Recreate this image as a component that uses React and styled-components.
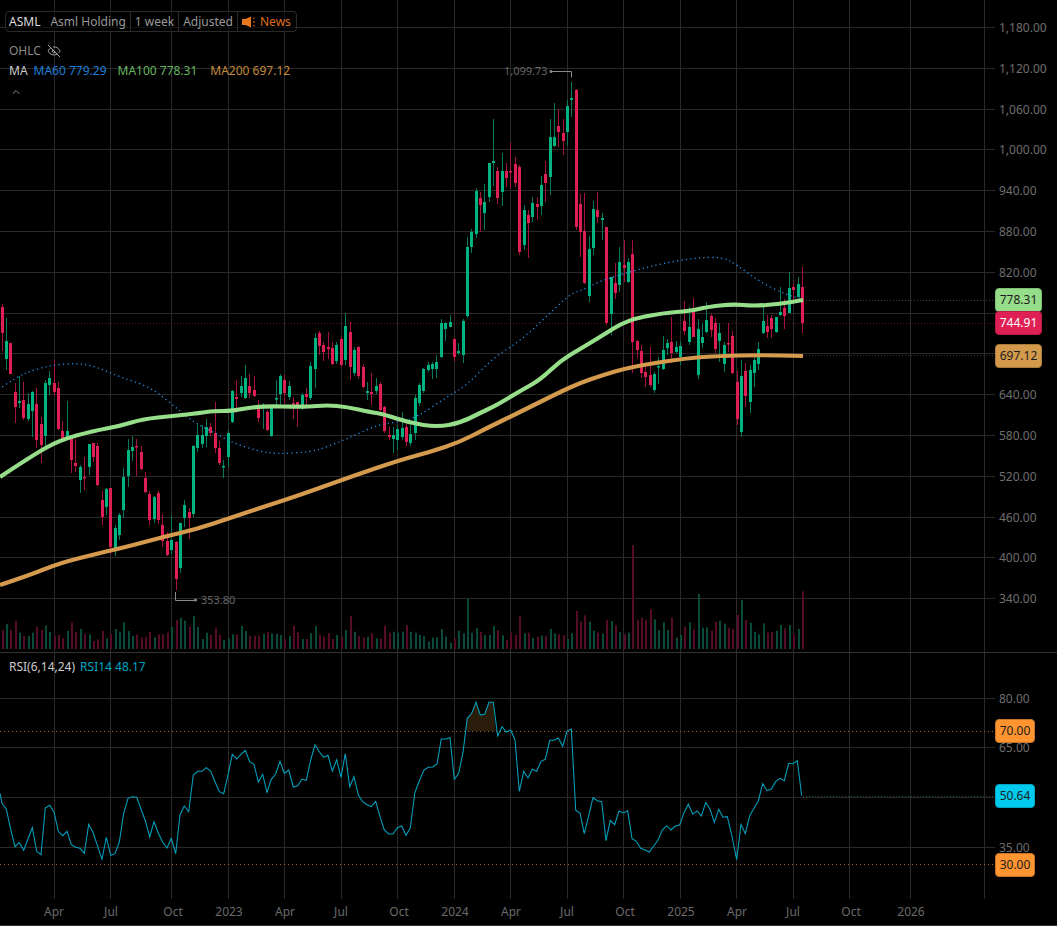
import React from "react";
import styled, { createGlobalStyle } from "styled-components";
import { EyeOff, ChevronUp } from "lucide-react";

const FONT = `"Noto Sans", "Open Sans", "Liberation Sans", sans-serif`;

const Global = createGlobalStyle`
  html, body { margin: 0; padding: 0; background: #000; }
  body { font-family: ${FONT}; }
`;

/* [up, bodyTop, bodyBottom, wickTop, wickBottom] */
const CANDLES = [
[0,307,333,304,351],[1,341,359,318,370],[0,343,374,343,374],[0,392,407,383,423],[1,401,403,376,408],
[0,400,418,382,420],[1,404,419,393,421],[1,392,411,391,437],[0,404,440,388,448],[0,424,445,417,463],
[1,383,436,380,447],[1,378,385,371,395],[0,383,392,360,396],[0,388,429,382,430],[0,431,438,421,439],
[1,431,438,401,440],[0,438,460,437,473],[0,463,466,439,472],[1,467,480,465,493],[0,477,478,457,490],
[1,444,467,444,475],[0,443,457,443,462],[0,446,485,443,486],[0,500,517,491,525],[1,489,507,488,515],
[0,488,547,488,555],[1,528,548,525,556],[1,515,535,513,540],[1,477,510,468,518],[1,450,476,439,487],
[1,447,451,436,461],[0,446,447,439,476],[0,452,469,446,470],[0,478,492,472,493],[0,494,520,491,525],
[1,497,519,496,523],[0,493,520,491,524],[0,525,541,514,547],[0,541,555,532,556],[1,540,550,515,554],
[0,542,579,541,590],[1,523,568,523,573],[1,505,518,500,527],[0,512,518,508,539],[1,446,514,445,517],
[1,435,448,425,452],[1,435,444,425,448],[1,427,436,419,447],[0,427,433,423,436],[0,433,448,402,453],
[0,448,463,441,465],[1,466,467,460,478],[1,433,457,430,467],[1,391,422,390,423],[0,397,399,380,413],
[1,386,393,376,397],[1,378,398,365,399],[0,386,393,374,398],[0,390,396,376,397],[0,407,418,400,422],
[1,406,408,403,429],[0,412,430,410,431],[1,407,436,405,437],[1,398,399,380,408],[1,376,394,374,408],
[0,380,393,375,404],[1,386,397,381,400],[0,403,404,397,419],[0,402,405,402,427],[1,395,406,393,410],
[0,394,397,388,407],[1,366,398,362,400],[1,338,369,333,388],[0,333,346,331,355],[0,345,352,342,361],
[0,347,349,332,359],[0,348,364,342,365],[1,345,361,342,364],[0,339,365,337,367],[1,326,360,313,365],
[0,332,367,322,380],[1,350,373,347,376],[0,347,376,346,379],[0,367,387,364,388],[1,391,393,382,400],
[0,392,394,373,405],[1,386,391,378,394],[0,384,410,382,411],[0,407,431,406,433],[0,435,437,427,440],
[1,435,439,427,453],[1,429,440,426,450],[1,428,437,412,440],[0,427,442,424,446],[1,434,443,425,446],
[1,398,433,395,440],[1,385,403,383,406],[1,369,391,368,393],[1,365,370,362,372],[1,364,369,362,379],
[1,362,369,355,378],[1,323,357,319,358],[1,323,329,322,341],[1,322,327,315,327],[0,339,357,338,362],
[1,351,353,343,355],[1,321,355,319,363],[1,247,316,237,318],[1,232,247,229,253],[1,191,234,188,238],
[0,198,205,192,232],[1,202,213,184,230],[1,163,197,163,202],[1,161,163,119,186],[0,171,198,167,204],
[1,171,192,153,206],[0,171,178,163,187],[0,171,172,142,189],[0,164,183,157,187],[0,167,252,165,255],
[1,210,245,205,250],[0,215,223,210,258],[1,203,217,197,222],[0,204,207,197,220],[1,185,206,176,215],
[0,174,183,161,202],[1,137,177,119,195],[1,137,146,103,147],[0,126,132,109,147],[0,133,141,119,155],
[1,106,132,100,146],[1,98,100,82,117],[0,90,227,89,230],[0,204,232,194,257],[0,231,283,193,284],
[1,249,296,236,302],[1,209,248,201,255],[0,210,217,192,223],[1,218,220,213,240],[0,227,323,227,325],
[1,277,314,277,335],[0,283,293,263,299],[1,262,285,247,292],[0,265,268,240,282],[1,262,282,258,283],
[0,254,342,240,373],[0,341,350,340,358],[0,351,373,345,378],[0,372,377,367,387],[0,375,385,347,387],
[1,374,390,372,393],[1,366,367,357,384],[1,350,369,336,370],[1,343,348,339,355],[0,342,353,317,363],
[1,347,352,341,353],[1,346,357,341,365],[0,321,331,301,335],[1,327,342,307,345],[0,312,337,298,337],
[1,329,375,319,379],[1,337,343,323,348],[1,320,332,302,333],[0,316,330,314,337],[0,323,349,318,353],
[1,333,341,323,362],[1,345,364,342,372],[0,343,344,323,352],[0,336,373,331,374],[0,382,419,371,425],
[1,376,432,360,437],[0,371,396,363,407],[1,370,402,365,413],[1,360,373,355,387],[1,349,364,342,370],
[1,321,333,306,334],[0,326,332,315,338],[0,318,329,315,338],[1,317,332,317,333],[1,312,315,287,316],
[0,308,316,299,329],[1,288,313,272,313],[0,287,290,283,300],[1,284,297,277,297],[0,287,323,267,333],
];

/* tops of the volume bars, as measured on a 3x crop (bottom at 207) */
const VOLUME = [
150,132,150,122,158,168,168,158,140,150,136,156,168,164,175,153,127,155,147,162,163,183,178,153,175,162,147,155,127,153,
168,163,172,170,155,172,163,163,158,141,120,113,122,141,108,141,177,158,165,143,165,180,175,163,163,138,153,167,167,167,
162,155,160,162,165,177,168,138,155,177,177,160,138,165,170,160,177,165,170,150,108,155,168,172,170,160,175,175,137,158,
155,158,
155,135,155,158,165,168,185,173,172,147,170,188,177,152,160,57,158,145,155,165,165,138,150,166,180,158,165,108,160,158,
174,170,167,168,147,160,163,166,177,160,93,125,106,125,152,158,161,120,123,136,156,163,158,-105,120,113,120,88,118,150,
127,150,113,173,165,140,127,148,42,143,142,152,125,122,131,143,147,105,60,120,128,155,163,130,158,155,152,135,145,135,
165,147,34,
];

const MA100 = [[0,477],[33,455],[60,440],[93,431],[120,426],[143,419],[173,416],[200,413],[213,411],[233,411],[258,406],[307,407],[327,405],[347,407],[370,412],[383,414],[410,423],[437,427],[460,423],[480,413],[497,405],[520,391],[540,380],[560,361],[580,349],[600,337],[627,320],[663,313],[690,311],[707,307],[733,304],[753,306],[780,304],[803,300]];
const MA200 = [[0,585],[30,575],[60,563],[100,553],[130,546],[163,537],[197,529],[230,518],[260,508],[300,495],[350,477],[400,460],[430,452],[460,442],[487,428],[520,412],[560,392],[580,383],[600,376],[630,367],[687,358],[720,356],[760,355],[803,356]];
const MA60 = [[2,387],[17,377],[33,370],[53,365],[77,363],[97,367],[120,377],[150,387],[173,405],[193,422],[213,432],[233,443],[258,451],[277,454],[310,452],[327,447],[353,436],[380,424],[400,422],[417,417],[447,397],[467,385],[493,358],[520,341],[545,318],[570,294],[585,289],[600,281],[633,271],[660,264],[693,258],[723,257],[737,265],[760,282],[787,295],[803,299]];

const RSI_A = [[0,310],[6,340],[19,357],[32,418],[45,470],[58,458],[71,481],[84,447],[97,413],[110,484],[123,494],[136,354],[149,346],[162,366],[175,424],[188,437],[201,424],[214,464],[227,472],[240,475],[253,490],[266,403],[279,427],[292,466],[306,508],[319,442],[332,496],[345,491],[358,456],[371,370],[384,325],[397,320],[410,322],[423,357],[436,392],[449,441],[462,395],[475,430],[488,456],[501,474],[514,445],[527,491],[540,375],[553,348],[566,365],[580,255],[593,244],[606,244],[619,233],[632,244],[645,275],[658,305],[671,311],[684,255],[697,193],[710,207],[723,193],[736,181],[749,215],[762,223],[775,276],[788,253],[801,307],[814,268],[827,252],[840,214],[853,250],[866,240],[880,291],[893,287],[906,267],[919,271],[932,210],[945,164],[958,185],[971,202],[984,196],[997,243],[1010,209],[1023,262],[1036,191],[1049,290],[1062,260],[1075,315],[1088,335],[1101,344],[1114,350],[1127,334],[1140,380],[1153,420],[1166,432],[1179,432],[1192,413],[1205,408],[1218,436],[1231,414],[1244,310],[1258,272]];
const RSI_B = [[12,240],[25,232],[38,231],[51,222],[64,147],[77,147],[90,143],[103,268],[116,250],[129,187],[142,85],[155,70],[168,37],[181,75],[194,73],[207,37],[220,37],[233,138],[246,110],[259,126],[272,120],[285,150],[298,304],[311,244],[324,264],[337,238],[350,244],[363,214],[376,208],[389,151],[402,151],[415,144],[428,169],[441,123],[454,117],[467,361],[480,369],[493,431],[506,377],[519,323],[532,332],[545,335],[558,452],[571,391],[584,404],[597,363],[610,369],[623,362],[636,446],[649,454],[662,475],[675,480],[688,486],[701,468],[714,450],[727,420],[740,407],[753,420],[766,408],[779,405],[792,368],[805,343],[818,373],[831,363],[844,378],[857,338],[870,357],[883,397],[896,358],[909,382],[922,380],[935,435],[950,509],[963,403],[976,431],[989,377],[1002,355],[1015,333],[1028,281],[1041,302],[1054,297],[1067,275],[1080,265],[1093,272],[1106,220],[1119,221],[1132,212],[1145,317]];
const RSI = [
  ...RSI_A.map(([x, y]) => [x / 3, 690 + y / 3]),
  ...RSI_B.map(([x, y]) => [420 + x / 3, 690 + y / 3]),
];
const OVERBOUGHT = [[140,124],[142,85],[155,70],[168,37],[181,75],[194,73],[207,37],[220,37],[227,124]]
  .map(([x, y]) => `${420 + x / 3},${690 + y / 3}`).join(" ");

const VERTICALS = [54.5,110.5,171.5,228.5,284.5,341.5,397.5,454.5,510.5,567.5,623.5,680.5,736.5,793.5,849.5,910.5,984.5];
const PRICE_LINES = Array.from({ length: 15 }, (_, i) => Math.floor(27.5 + i * 40.8) + 0.5);
const PRICES = ["1,180.00","1,120.00","1,060.00","1,000.00","940.00","880.00","820.00",null,null,"640.00","580.00","520.00","460.00","400.00","340.00"];
const RSI_LINES = [[698.5,"80.00"],[747.5,"65.00"],[797.5,null],[847.5,"35.00"]];
const TIMES = [["Apr",54],["Jul",111],["Oct",173],["2023",229],["Apr",285],["Jul",341],["Oct",399],["2024",455],["Apr",511],["Jul",567],["Oct",625],["2025",681],["Apr",737],["Jul",793],["Oct",851],["2026",911]];

const candleX = (i) => Math.round(1.5 + 4.35 * i);

const smooth = (pts) => {
  let d = `M${pts[0][0]} ${pts[0][1]}`;
  for (let i = 1; i < pts.length - 1; i++) {
    const mx = (pts[i][0] + pts[i + 1][0]) / 2;
    const my = (pts[i][1] + pts[i + 1][1]) / 2;
    d += ` Q${pts[i][0]} ${pts[i][1]} ${mx} ${my}`;
  }
  const l = pts[pts.length - 1];
  return `${d} L${l[0]} ${l[1]}`;
};
const poly = (pts) => pts.map(([x, y]) => `${x.toFixed(1)},${y.toFixed(1)}`).join(" ");

const Frame = styled.div`
  width: 1057px;
  height: 926px;
  background: #000;
  display: flex;
  flex-direction: column;
  overflow: hidden;
  font-family: ${FONT};
  font-size: 12px;
  line-height: 16px;
`;
const MainPane = styled.section`
  position: relative;
  height: 652px;
  flex: none;
  border-bottom: 1px solid #333;
`;
const RsiPane = styled.section`
  position: relative;
  height: 246px;
  flex: none;
`;
const TimeAxis = styled.footer`
  position: relative;
  flex: 1;
  border-bottom: 1px solid #333;
`;
const PaneChart = styled.svg`
  display: block;
  width: 1057px;
  height: 100%;
`;
const Legend = styled.div`
  position: absolute;
  left: 5px;
  top: 11px;
  display: flex;
  flex-direction: column;
  align-items: flex-start;
`;
const Toolbar = styled.div`
  display: flex;
  align-items: center;
  height: 19px;
  border: 1px solid #2a2a2a;
  border-radius: 4px;
  background: rgba(0, 0, 0, 0.6);
`;
const ToolItem = styled.div`
  display: flex;
  align-items: center;
  height: 100%;
  padding: 0 ${(p) => p.$pr ?? 4}px 0 ${(p) => p.$pl ?? 4}px;
  gap: ${(p) => p.$gap ?? 10}px;
  white-space: nowrap;
  color: #999;
  & + & { border-left: 1px solid #2a2a2a; }
`;
const Symbol = styled.span`
  color: #ddd;
`;
const NewsText = styled.span`
  color: #df6f1f;
`;
const LegendRow = styled.div`
  display: flex;
  align-items: center;
  margin: ${(p) => p.$mt ?? 0}px 0 0 4px;
  height: 16px;
  gap: ${(p) => p.$gap ?? 6}px;
  color: #888;
  white-space: nowrap;
`;
const SeriesName = styled.span`
  color: #ccc;
`;
const SeriesValue = styled.span`
  color: ${(p) => p.$c};
  margin-right: ${(p) => p.$mr ?? 0}px;
`;
const Collapse = styled.div`
  margin: 7px 0 0 5px;
  height: 12px;
  color: #8c8c8c;
  display: flex;
`;
const RsiLegend = styled(LegendRow)`
  position: absolute;
  left: 5px;
  top: 6px;
`;
const AxisLabel = styled.span`
  position: absolute;
  left: 999px;
  transform: translateY(-50%);
  color: #6e6e6e;
  white-space: nowrap;
`;
const TimeLabel = styled.span`
  position: absolute;
  top: 5px;
  transform: translateX(-50%);
  color: #6a6a6a;
`;
const Tag = styled.div`
  position: absolute;
  left: 995px;
  width: ${(p) => p.$w}px;
  height: 24px;
  box-sizing: border-box;
  border-radius: 4px;
  border: 1px solid ${(p) => p.$line};
  background: ${(p) => p.$bg};
  color: ${(p) => p.$fg};
  display: flex;
  align-items: center;
  justify-content: center;
  font-size: 12px;
`;
const ExtremeText = styled.span`
  position: absolute;
  color: #666;
  font-size: 11px;
  line-height: 14px;
`;

const Megaphone = () => (
  <svg width="15" height="12" viewBox="0 0 15 12" style={{ marginRight: 3 }}>
    <path d="M0 3h3.4L9 0.5v11L3.4 9H0z" fill="#e8761e" />
    <path d="M11 2.6l1.6-.8M11 6h2M11 9.4l1.6.8" stroke="#e8761e" strokeWidth="1" fill="none" />
  </svg>
);

const Candles = () => (
  <g>
    {CANDLES.map(([up, t, b, wt, wb], i) => {
      const x = candleX(i);
      return (
        <g key={i}>
          <rect x={x} y={wt} width="1" height={wb - wt} fill={up ? "#08785c" : "#a5123e"} />
          <rect x={x - 1} y={t} width="3" height={Math.max(b - t, 1.5)} fill={up ? "#00b383" : "#de1f53"} />
        </g>
      );
    })}
  </g>
);

const Volumes = () => (
  <g>
    {VOLUME.map((z, i) => {
      const h = (207 - z) / 3;
      return (
        <rect key={i} x={candleX(i)} y={649 - h} width="2" height={h}
          fill={CANDLES[i][0] ? "#0a4a3a" : "#560c27"} />
      );
    })}
  </g>
);

const Grid = ({ lines, top, bottom }) => (
  <g stroke="#2a2a2a" strokeWidth="1">
    {VERTICALS.map((x) => <line key={x} x1={x} x2={x} y1={top} y2={bottom} />)}
    {lines.map((y) => <line key={y} x1="0" x2="995" y1={y} y2={y} />)}
  </g>
);

export default function App() {
  return (
    <Frame>
      <Global />
      <MainPane>
        <PaneChart viewBox="0 0 1057 652">
          <Grid lines={PRICE_LINES} top={0} bottom={652} />
          <line x1="0" x2="995" y1="323.5" y2="323.5" stroke="#5a1028" strokeDasharray="1 2" />
          <line x1="803" x2="995" y1="300.5" y2="300.5" stroke="#2c4a30" strokeDasharray="1 2" />
          <line x1="803" x2="995" y1="355.5" y2="355.5" stroke="#3f3320" strokeDasharray="1 2" />
          <Volumes />
          <Candles />
          <path d={smooth(MA60)} fill="none" stroke="#2a90ea" strokeWidth="1.3" strokeDasharray="1.2 3.2" />
          <path d={smooth(MA200)} fill="none" stroke="#d49b4f" strokeWidth="4.2" />
          <path d={smooth(MA100)} fill="none" stroke="#97de8b" strokeWidth="4.2" />
          <g fill="none" stroke="#8a8a8a">
            <path d="M551 71.5h20.5v6" />
            <path d="M175.5 592v8.5h20" />
          </g>
          <circle cx="551" cy="71.5" r="1.5" fill="#8a8a8a" />
          <circle cx="195.5" cy="600" r="1.5" fill="#8a8a8a" />
        </PaneChart>
        <Legend>
          <Toolbar>
            <ToolItem $pl={3}><Symbol>ASML</Symbol><span>Asml Holding</span></ToolItem>
            <ToolItem>1 week</ToolItem>
            <ToolItem>Adjusted</ToolItem>
            <ToolItem $gap={0} $pr={5}><Megaphone /><NewsText>News</NewsText></ToolItem>
          </Toolbar>
          <LegendRow $mt={11}>OHLC <EyeOff size={14} strokeWidth={1.6} color="#aaa" /></LegendRow>
          <LegendRow $mt={4}>
            <SeriesName>MA</SeriesName>
            <SeriesValue $c="#1f7fd9" $mr={5}>MA60 779.29</SeriesValue>
            <SeriesValue $c="#66b660" $mr={7}>MA100 778.31</SeriesValue>
            <SeriesValue $c="#c68a3c">MA200 697.12</SeriesValue>
          </LegendRow>
          <Collapse><ChevronUp size={12} strokeWidth={2} /></Collapse>
        </Legend>
        <ExtremeText style={{ left: 504, top: 64 }}>1,099.73</ExtremeText>
        <ExtremeText style={{ left: 201, top: 593 }}>353.80</ExtremeText>
        {PRICES.map((p, i) => p && <AxisLabel key={p} style={{ top: PRICE_LINES[i] }}>{p}</AxisLabel>)}
        <Tag $w={47} $bg="#95dd88" $line="#7fbf74" $fg="#1c1c1c" style={{ top: 288 }}>778.31</Tag>
        <Tag $w={47} $bg="#df2055" $line="#b81a46" $fg="#fff" style={{ top: 311 }}>744.91</Tag>
        <Tag $w={47} $bg="#d49a4c" $line="#a87a3c" $fg="#1c1c1c" style={{ top: 344 }}>697.12</Tag>
      </MainPane>
      <RsiPane>
        <PaneChart viewBox="0 653 1057 246">
          <Grid lines={RSI_LINES.map((r) => r[0])} top={653} bottom={899} />
          <polygon points={OVERBOUGHT} fill="#2a1c0b" />
          <line x1="0" x2="995" y1="731.5" y2="731.5" stroke="#a86420" strokeDasharray="1 3" />
          <line x1="0" x2="995" y1="864.5" y2="864.5" stroke="#a86420" strokeDasharray="1 3" />
          <line x1="803" x2="995" y1="796.5" y2="796.5" stroke="#204a48" strokeDasharray="1 2" />
          <polyline points={poly(RSI)} fill="none" stroke="#00a2c0" strokeWidth="1.05" />
        </PaneChart>
        <RsiLegend $gap={5}>
          <SeriesName>RSI(6,14,24)</SeriesName>
          <SeriesValue $c="#00a5c4">RSI14 48.17</SeriesValue>
        </RsiLegend>
        {RSI_LINES.filter((r) => r[1]).map(([y, t]) => (
          <AxisLabel key={t} style={{ top: y - 653 }}>{t}</AxisLabel>
        ))}
        <Tag $w={40} $bg="#ff9430" $line="#c9742a" $fg="#1c1c1c" style={{ top: 66 }}>70.00</Tag>
        <Tag $w={40} $bg="#00cbef" $line="#00a5c2" $fg="#1c1c1c" style={{ top: 131 }}>50.64</Tag>
        <Tag $w={40} $bg="#ff9430" $line="#c9742a" $fg="#1c1c1c" style={{ top: 200 }}>30.00</Tag>
      </RsiPane>
      <TimeAxis>
        {TIMES.map(([t, x]) => <TimeLabel key={`${t}${x}`} style={{ left: x }}>{t}</TimeLabel>)}
      </TimeAxis>
    </Frame>
  );
}
